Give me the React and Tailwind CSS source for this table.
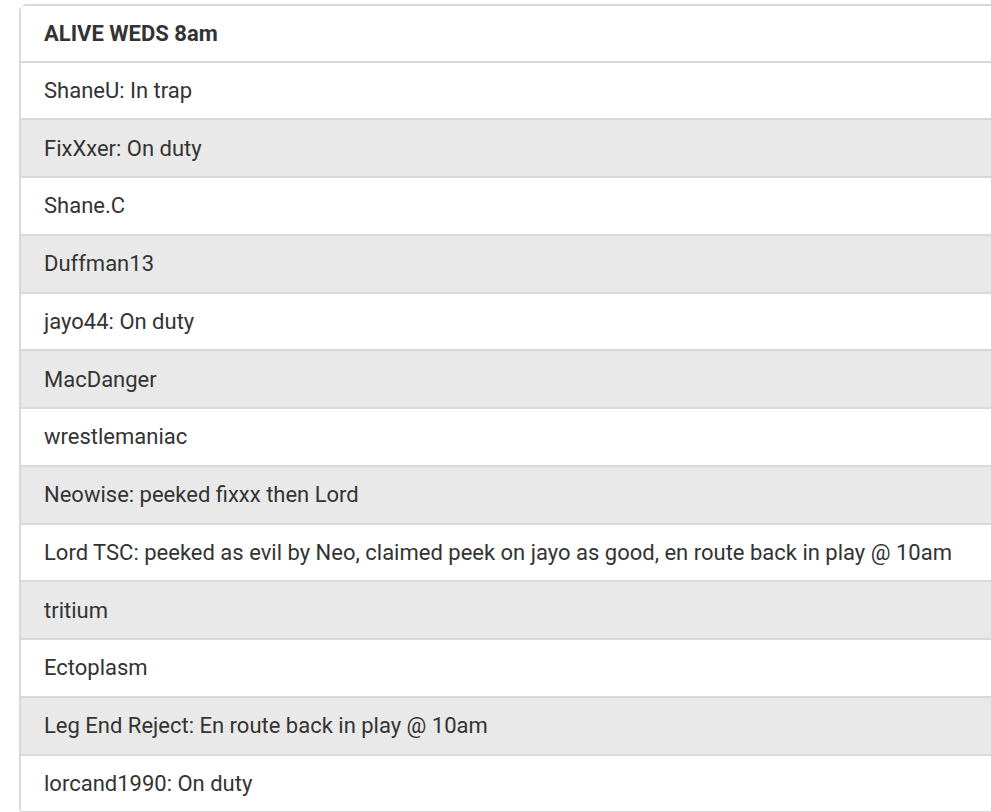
import React from "react";

const rows = [
  "ShaneU: In trap",
  "FixXxer: On duty",
  "Shane.C",
  "Duffman13",
  "jayo44: On duty",
  "MacDanger",
  "wrestlemaniac",
  "Neowise: peeked fixxx then Lord",
  "Lord TSC: peeked as evil by Neo, claimed peek on jayo as good, en route back in play @ 10am",
  "tritium",
  "Ectoplasm",
  "Leg End Reject: En route back in play @ 10am",
  "lorcand1990: On duty",
];

export default function App() {
  return (
    <div className="w-[991px] h-[812px] overflow-hidden bg-white" style={{ fontFamily: "Roboto, 'Liberation Sans', sans-serif" }}>
      <div className="ml-[19px] mt-[4px] w-[1000px] border-2 border-[#d9d9d9] rounded-[8px] text-[22px] text-[#333333]">
        <div className="h-[56.5px] flex items-center pl-[23px] font-bold border-b-2 border-[#d9d9d9] bg-white">
          ALIVE WEDS 8am
        </div>
        {rows.map((r, i) => (
          <div
            key={i}
            className={
              "h-[57.75px] flex items-center pl-[23px] border-b-2 border-[#d9d9d9] " +
              (i % 2 === 0 ? "bg-white" : "bg-[#e9e9e9]")
            }
          >
            {r}
          </div>
        ))}
      </div>
    </div>
  );
}
